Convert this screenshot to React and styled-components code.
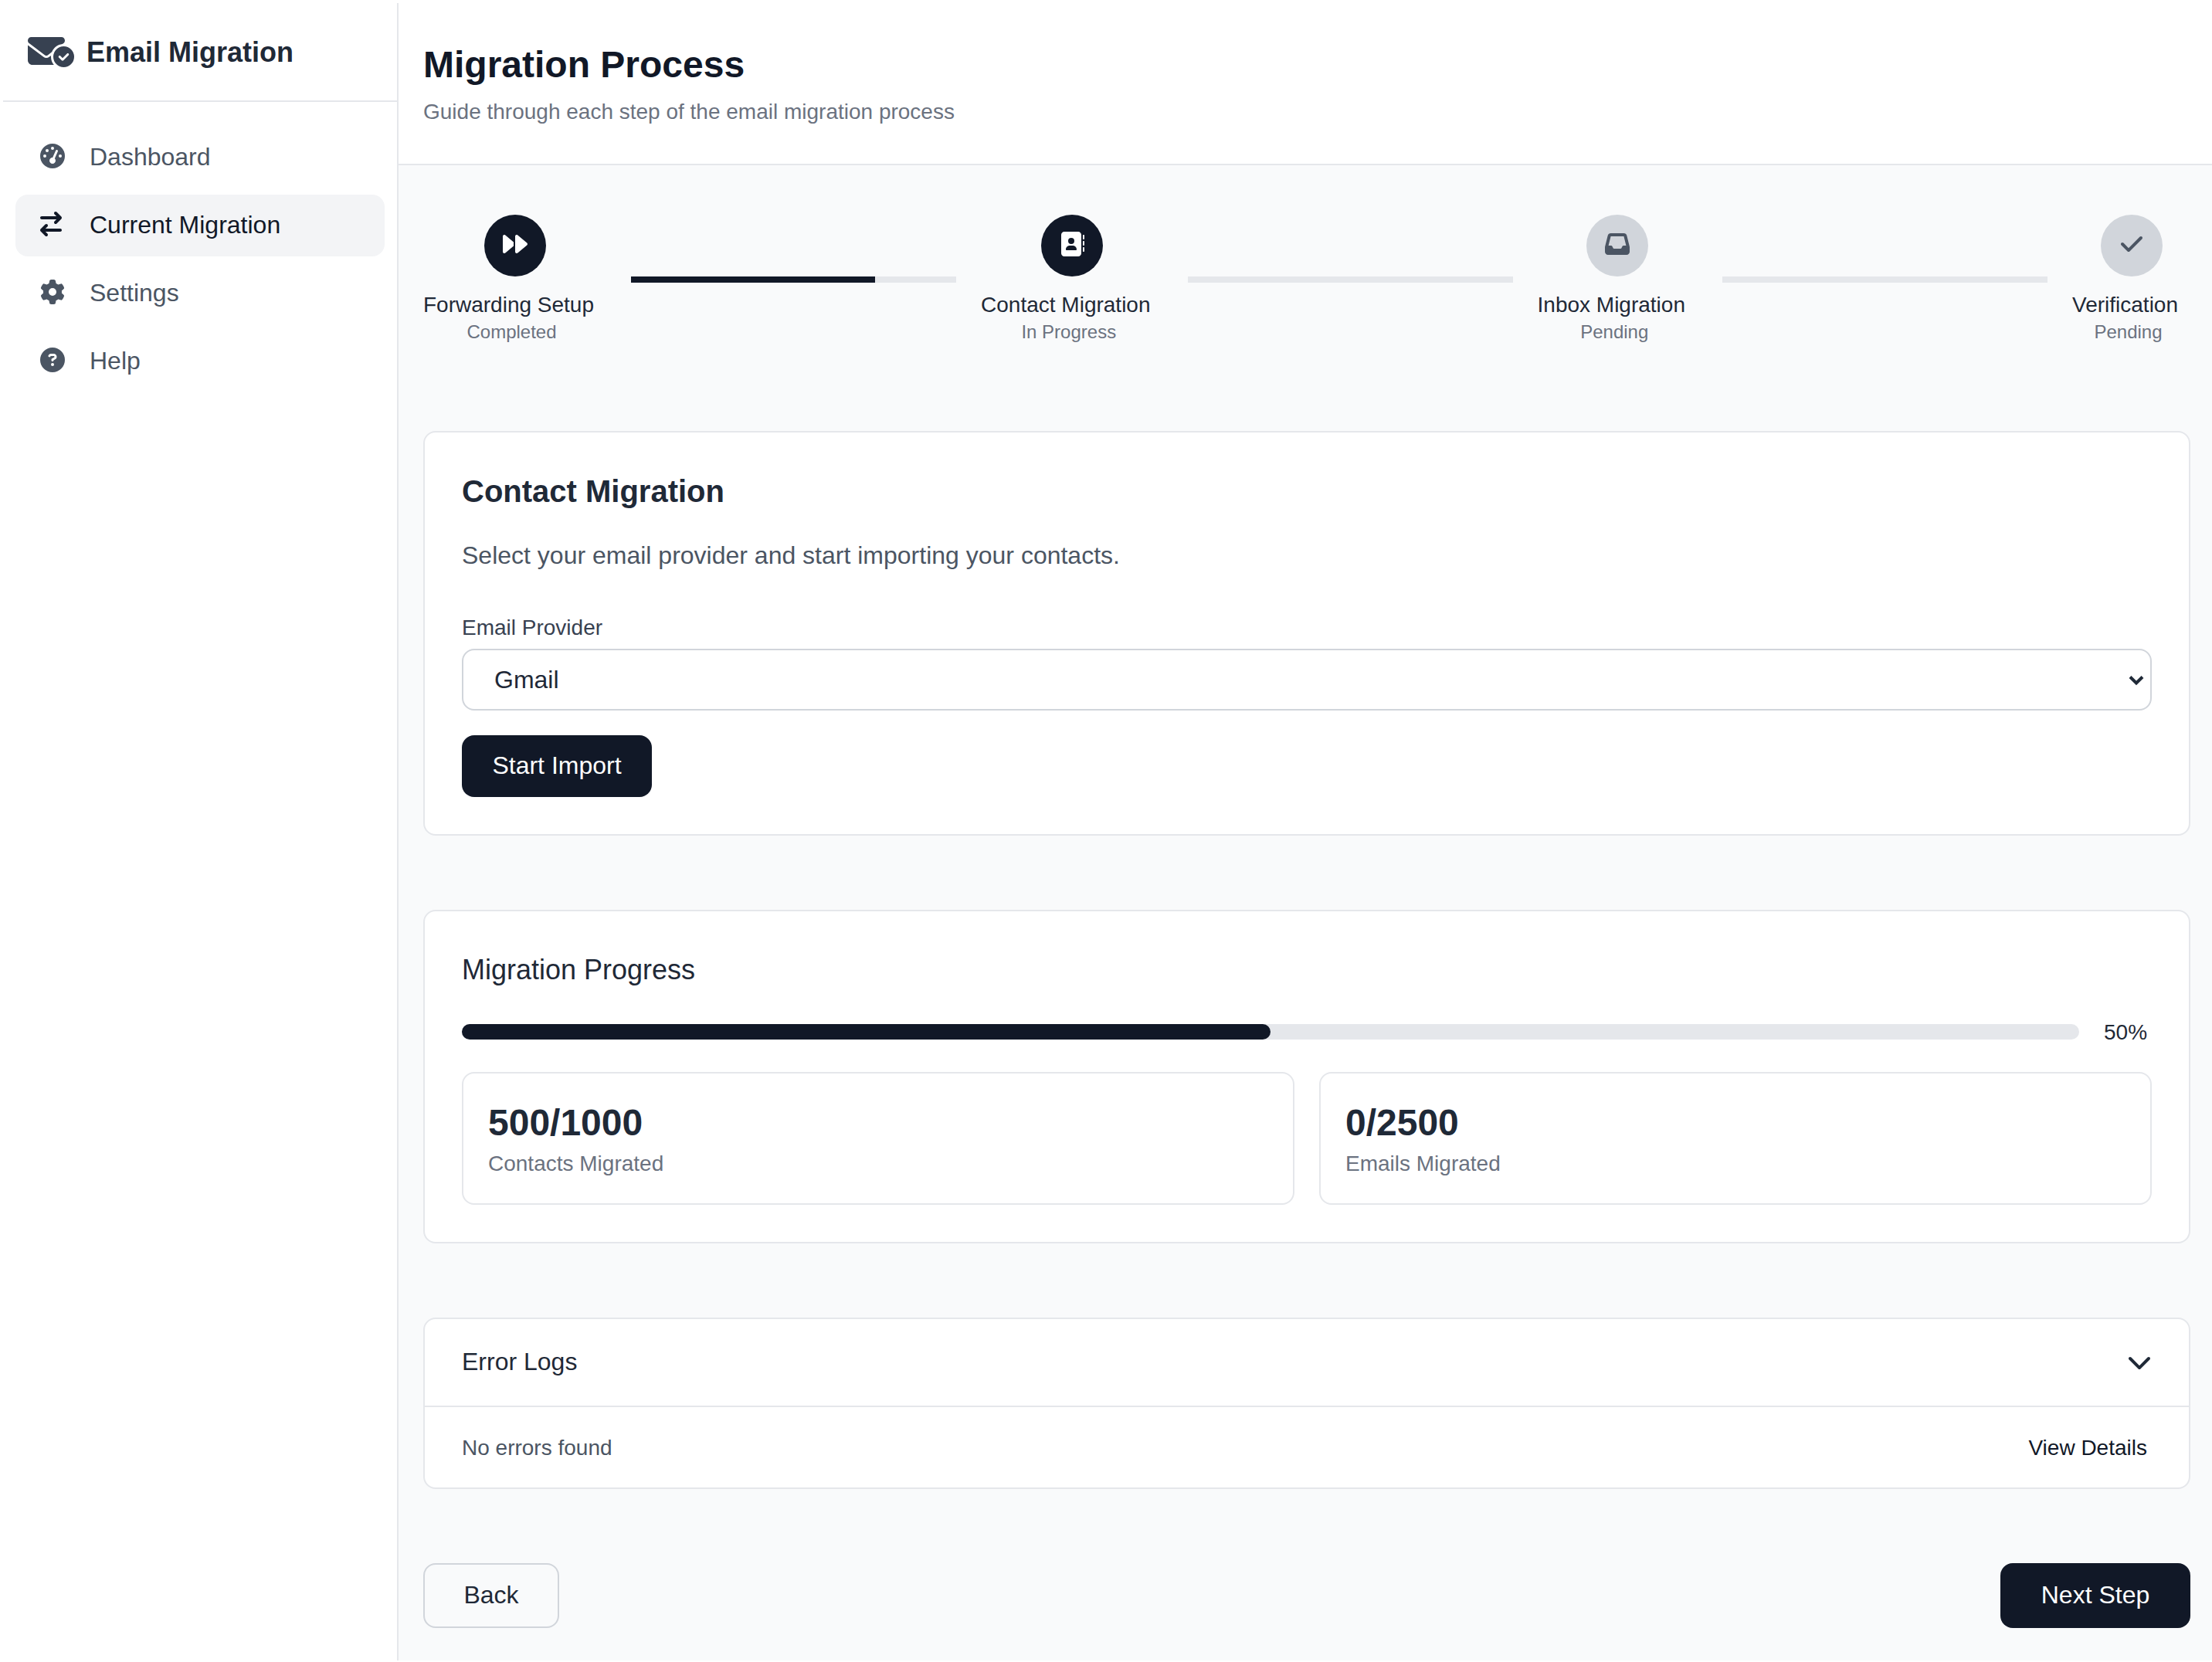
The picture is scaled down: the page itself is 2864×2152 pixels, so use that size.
import React from "react";
import styled, { createGlobalStyle } from "styled-components";
import {
  FaEnvelopeCircleCheck,
  FaGaugeHigh,
  FaGear,
  FaCircleQuestion,
  FaForward,
  FaAddressBook,
  FaInbox,
  FaCheck,
  FaChevronDown,
} from "react-icons/fa6";

const color = {
  ink: "#111827",
  heading: "#1f2937",
  label: "#374151",
  text: "#4b5563",
  muted: "#6b7280",
  outline: "#d1d5db",
  line: "#e5e7eb",
  hover: "#f3f4f6",
  canvas: "#f9fafb",
};

const GlobalStyle = createGlobalStyle`
  *, *::before, *::after { box-sizing: border-box; }
  body {
    margin: 0;
    background: #ffffff;
    color: ${color.heading};
    font-family: "Liberation Sans", Arial, Helvetica, sans-serif;
    font-size: 32px;
    line-height: 46px;
  }
  h1, h2, h3, p, ul, ol { margin: 0; padding: 0; }
  ul, ol { list-style: none; }
  button, select { font: inherit; color: inherit; margin: 0; cursor: pointer; }
`;

const Page = styled.div`
  display: flex;
  min-height: 100vh;
  padding: 4px 0 2px 4px;
`;

const Sidebar = styled.aside`
  flex: none;
  width: 512px;
  border-right: 2px solid ${color.line};
`;

const Brand = styled.div`
  display: flex;
  align-items: center;
  gap: 16px;
  height: 128px;
  padding: 2px 32px 0;
  border-bottom: 2px solid ${color.line};
  font-size: 36px;
  line-height: 56px;
  font-weight: 700;

  svg {
    width: 60px;
    height: 48px;
    margin-bottom: 4px;
    color: ${color.label};
  }
`;

const NavList = styled.ul`
  display: flex;
  flex-direction: column;
  gap: 8px;
  padding: 32px 16px;
`;

const NavLink = styled.a`
  display: flex;
  align-items: baseline;
  padding: 16px 32px 18px;
  border-radius: 16px;
  text-decoration: none;
  color: ${(p) => (p.$active ? color.ink : color.text)};
  background: ${(p) => (p.$active ? color.hover : "transparent")};
`;

const NavIcon = styled.span`
  flex: none;
  width: 64px;

  svg {
    height: 32px;
    width: auto;
    vertical-align: -4px;
  }
`;

const Main = styled.main`
  flex: 1;
  min-width: 0;
  background: ${color.canvas};
`;

const PageHeader = styled.header`
  padding: 48px 28px 46px 32px;
  background: #ffffff;
  border-bottom: 2px solid ${color.line};
`;

const PageTitle = styled.h1`
  font-size: 48px;
  line-height: 64px;
  font-weight: 700;
  color: ${color.ink};
`;

const PageSubtitle = styled.p`
  margin-top: 8px;
  font-size: 28px;
  line-height: 42px;
  color: ${color.muted};
`;

const Content = styled.div`
  display: flex;
  flex-direction: column;
  gap: 96px;
  padding: 64px 28px 40px 32px;
`;

const Stepper = styled.ol`
  display: flex;
  align-items: center;
  gap: 32px;
  padding-bottom: 16px;
`;

const Step = styled.li`
  display: flex;
  flex-direction: column;
  align-items: center;
  padding-bottom: 2px;
`;

const StepBadge = styled.span`
  display: flex;
  align-items: center;
  justify-content: center;
  width: 80px;
  height: 80px;
  padding-bottom: 4px;
  margin-bottom: 16px;
  border-radius: 50%;
  background: ${(p) => (p.$reached ? color.ink : color.outline)};
  color: ${(p) => (p.$reached ? "#ffffff" : color.text)};

  svg {
    height: 32px;
    width: auto;
  }
`;

const StepName = styled.span`
  padding-right: 16px;
  font-size: 28px;
  line-height: 42px;
  white-space: nowrap;
`;

const StepStatus = styled.span`
  padding-right: 8px;
  font-size: 24px;
  line-height: 28px;
  white-space: nowrap;
  color: ${color.muted};
`;

const Connector = styled.li`
  flex: 1;
  height: 8px;
  background: ${color.line};
`;

const ConnectorFill = styled.div`
  height: 100%;
  background: ${color.ink};
`;

const Card = styled.section`
  padding: ${(p) => (p.$flush ? "0" : "48px")};
  background: #ffffff;
  border: 2px solid ${color.line};
  border-radius: 16px;
`;

const CardTitle = styled.h2`
  font-size: 40px;
  line-height: 56px;
  font-weight: 700;
`;

const CardSubtitle = styled.h3`
  font-size: 36px;
  line-height: 56px;
  font-weight: 400;
`;

const CardText = styled.p`
  margin-top: 32px;
  color: ${color.text};
`;

const Field = styled.div`
  display: flex;
  flex-direction: column;
  gap: 6px;
  margin: 50px 0 32px;
`;

const FieldLabel = styled.label`
  font-size: 28px;
  line-height: 42px;
  color: ${color.label};
`;

const SelectWrap = styled.div`
  position: relative;
  display: flex;

  svg {
    position: absolute;
    right: 10px;
    top: 34px;
    width: 20px;
    height: 14px;
    pointer-events: none;
  }
`;

const Select = styled.select`
  flex: 1;
  height: 80px;
  padding: 0 40px;
  appearance: none;
  background: #ffffff;
  border: 2px solid ${color.outline};
  border-radius: 16px;
`;

const Button = styled.button`
  display: inline-flex;
  align-items: center;
  justify-content: center;
  min-width: ${(p) => (p.$outline ? "176px" : "246px")};
  padding: ${(p) => (p.$large ? "18px 36px 20px" : "16px 36px 18px")};
  border: 0 solid;
  border-radius: 16px;
  color: #ffffff;
  background: ${color.ink};

  ${(p) =>
    p.$outline &&
    `
    border: 2px solid ${color.outline};
    color: ${color.heading};
    background: transparent;
  `}
`;

const ProgressRow = styled.div`
  display: flex;
  align-items: flex-start;
  gap: 32px;
  margin: 32px 0 30px;
`;

const ProgressTrack = styled.div`
  flex: 1;
  height: 20px;
  margin-top: 10px;
  border-radius: 10px;
  background: ${color.line};
`;

const ProgressFill = styled.div`
  height: 100%;
  border-radius: 10px;
  background: ${color.ink};
`;

const ProgressValue = styled.span`
  width: 62px;
  font-size: 28px;
  line-height: 42px;
`;

const StatGrid = styled.div`
  display: grid;
  grid-template-columns: 1fr 1fr;
  gap: 32px;
`;

const Stat = styled.div`
  padding: 32px 32px 30px;
  border: 2px solid ${color.line};
  border-radius: 16px;
`;

const StatValue = styled.p`
  font-size: 48px;
  line-height: 64px;
  font-weight: 700;
`;

const StatLabel = styled.p`
  font-size: 28px;
  line-height: 42px;
  color: ${color.muted};
`;

const LogToggle = styled.button`
  display: flex;
  align-items: center;
  justify-content: space-between;
  width: 100%;
  padding: 32px 48px 34px;
  border: 0;
  background: transparent;
  text-align: left;

  svg {
    width: 32px;
    height: 32px;
  }
`;

const LogRow = styled.div`
  display: flex;
  justify-content: space-between;
  padding: 32px 48px 30px;
  border-top: 2px solid ${color.line};
  font-size: 28px;
  line-height: 42px;
  color: ${color.text};
`;

const LogLink = styled.a`
  padding-right: 6px;
  color: ${color.ink};
  text-decoration: none;
`;

const Actions = styled.div`
  display: flex;
  justify-content: space-between;
`;

const TransferIcon = () => (
  <svg viewBox="0 0 448 512" fill="currentColor" aria-hidden="true">
    <path d="M438.600 150.600c12.500-12.500 12.500-32.800 0-45.300l-96-96c-12.500-12.500-32.800-12.500-45.300 0s-12.500 32.800 0 45.300L338.700 96 32 96C14.300 96 0 110.300 0 128s14.300 32 32 32l306.700 0-41.400 41.400c-12.500 12.500-12.500 32.800 0 45.300s32.800 12.500 45.300 0l96-96zm-333.300 352c12.500 12.500 32.800 12.500 45.300 0s12.500-32.800 0-45.300L109.300 416 416 416c17.700 0 32-14.300 32-32s-14.300-32-32-32l-306.700 0 41.400-41.400c12.500-12.500 12.500-32.800 0-45.300s-32.800-12.500-45.300 0l-96 96c-12.500 12.500-12.500 32.800 0 45.300l96 96z" />
  </svg>
);

const navItems = [
  { label: "Dashboard", Icon: FaGaugeHigh },
  { label: "Current Migration", Icon: TransferIcon, active: true },
  { label: "Settings", Icon: FaGear },
  { label: "Help", Icon: FaCircleQuestion },
];

const steps = [
  { name: "Forwarding Setup", status: "Completed", Icon: FaForward, reached: true, next: 75 },
  { name: "Contact Migration", status: "In Progress", Icon: FaAddressBook, reached: true, next: 0 },
  { name: "Inbox Migration", status: "Pending", Icon: FaInbox, next: 0 },
  { name: "Verification", status: "Pending", Icon: FaCheck },
];

const stats = [
  { value: "500/1000", label: "Contacts Migrated" },
  { value: "0/2500", label: "Emails Migrated" },
];

const progress = 50;

export default function App() {
  return (
    <>
      <GlobalStyle />
      <Page>
        <Sidebar>
          <Brand>
            <FaEnvelopeCircleCheck aria-hidden="true" />
            <span>Email Migration</span>
          </Brand>
          <nav>
            <NavList>
              {navItems.map(({ label, Icon, active }) => (
                <li key={label}>
                  <NavLink href="#" $active={active} aria-current={active ? "page" : undefined}>
                    <NavIcon>
                      <Icon aria-hidden="true" />
                    </NavIcon>
                    <span>{label}</span>
                  </NavLink>
                </li>
              ))}
            </NavList>
          </nav>
        </Sidebar>

        <Main>
          <PageHeader>
            <PageTitle>Migration Process</PageTitle>
            <PageSubtitle>Guide through each step of the email migration process</PageSubtitle>
          </PageHeader>

          <Content>
            <Stepper>
              {steps.map(({ name, status, Icon, reached, next }) => (
                <React.Fragment key={name}>
                  <Step>
                    <StepBadge $reached={reached}>
                      <Icon aria-hidden="true" />
                    </StepBadge>
                    <StepName>{name}</StepName>
                    <StepStatus>{status}</StepStatus>
                  </Step>
                  {next !== undefined && (
                    <Connector aria-hidden="true">
                      <ConnectorFill style={{ width: `${next}%` }} />
                    </Connector>
                  )}
                </React.Fragment>
              ))}
            </Stepper>

            <Card>
              <CardTitle>Contact Migration</CardTitle>
              <CardText>Select your email provider and start importing your contacts.</CardText>
              <Field>
                <FieldLabel htmlFor="provider">Email Provider</FieldLabel>
                <SelectWrap>
                  <Select id="provider" defaultValue="Gmail">
                    <option>Gmail</option>
                  </Select>
                  <svg viewBox="0 0 20 14" fill="none" aria-hidden="true">
                    <path d="M2 2.500l8 8 8-8" stroke="currentColor" strokeWidth="4" />
                  </svg>
                </SelectWrap>
              </Field>
              <Button type="button">Start Import</Button>
            </Card>

            <Card>
              <CardSubtitle>Migration Progress</CardSubtitle>
              <ProgressRow>
                <ProgressTrack
                  role="progressbar"
                  aria-label="Migration progress"
                  aria-valuemin={0}
                  aria-valuemax={100}
                  aria-valuenow={progress}
                >
                  <ProgressFill style={{ width: `${progress}%` }} />
                </ProgressTrack>
                <ProgressValue>{progress}%</ProgressValue>
              </ProgressRow>
              <StatGrid>
                {stats.map(({ value, label }) => (
                  <Stat key={label}>
                    <StatValue>{value}</StatValue>
                    <StatLabel>{label}</StatLabel>
                  </Stat>
                ))}
              </StatGrid>
            </Card>

            <Card $flush>
              <LogToggle type="button" aria-expanded="true">
                <span>Error Logs</span>
                <FaChevronDown aria-hidden="true" />
              </LogToggle>
              <LogRow>
                <span>No errors found</span>
                <LogLink href="#">View Details</LogLink>
              </LogRow>
            </Card>

            <Actions>
              <Button type="button" $outline>
                Back
              </Button>
              <Button type="button" $large>
                Next Step
              </Button>
            </Actions>
          </Content>
        </Main>
      </Page>
    </>
  );
}
